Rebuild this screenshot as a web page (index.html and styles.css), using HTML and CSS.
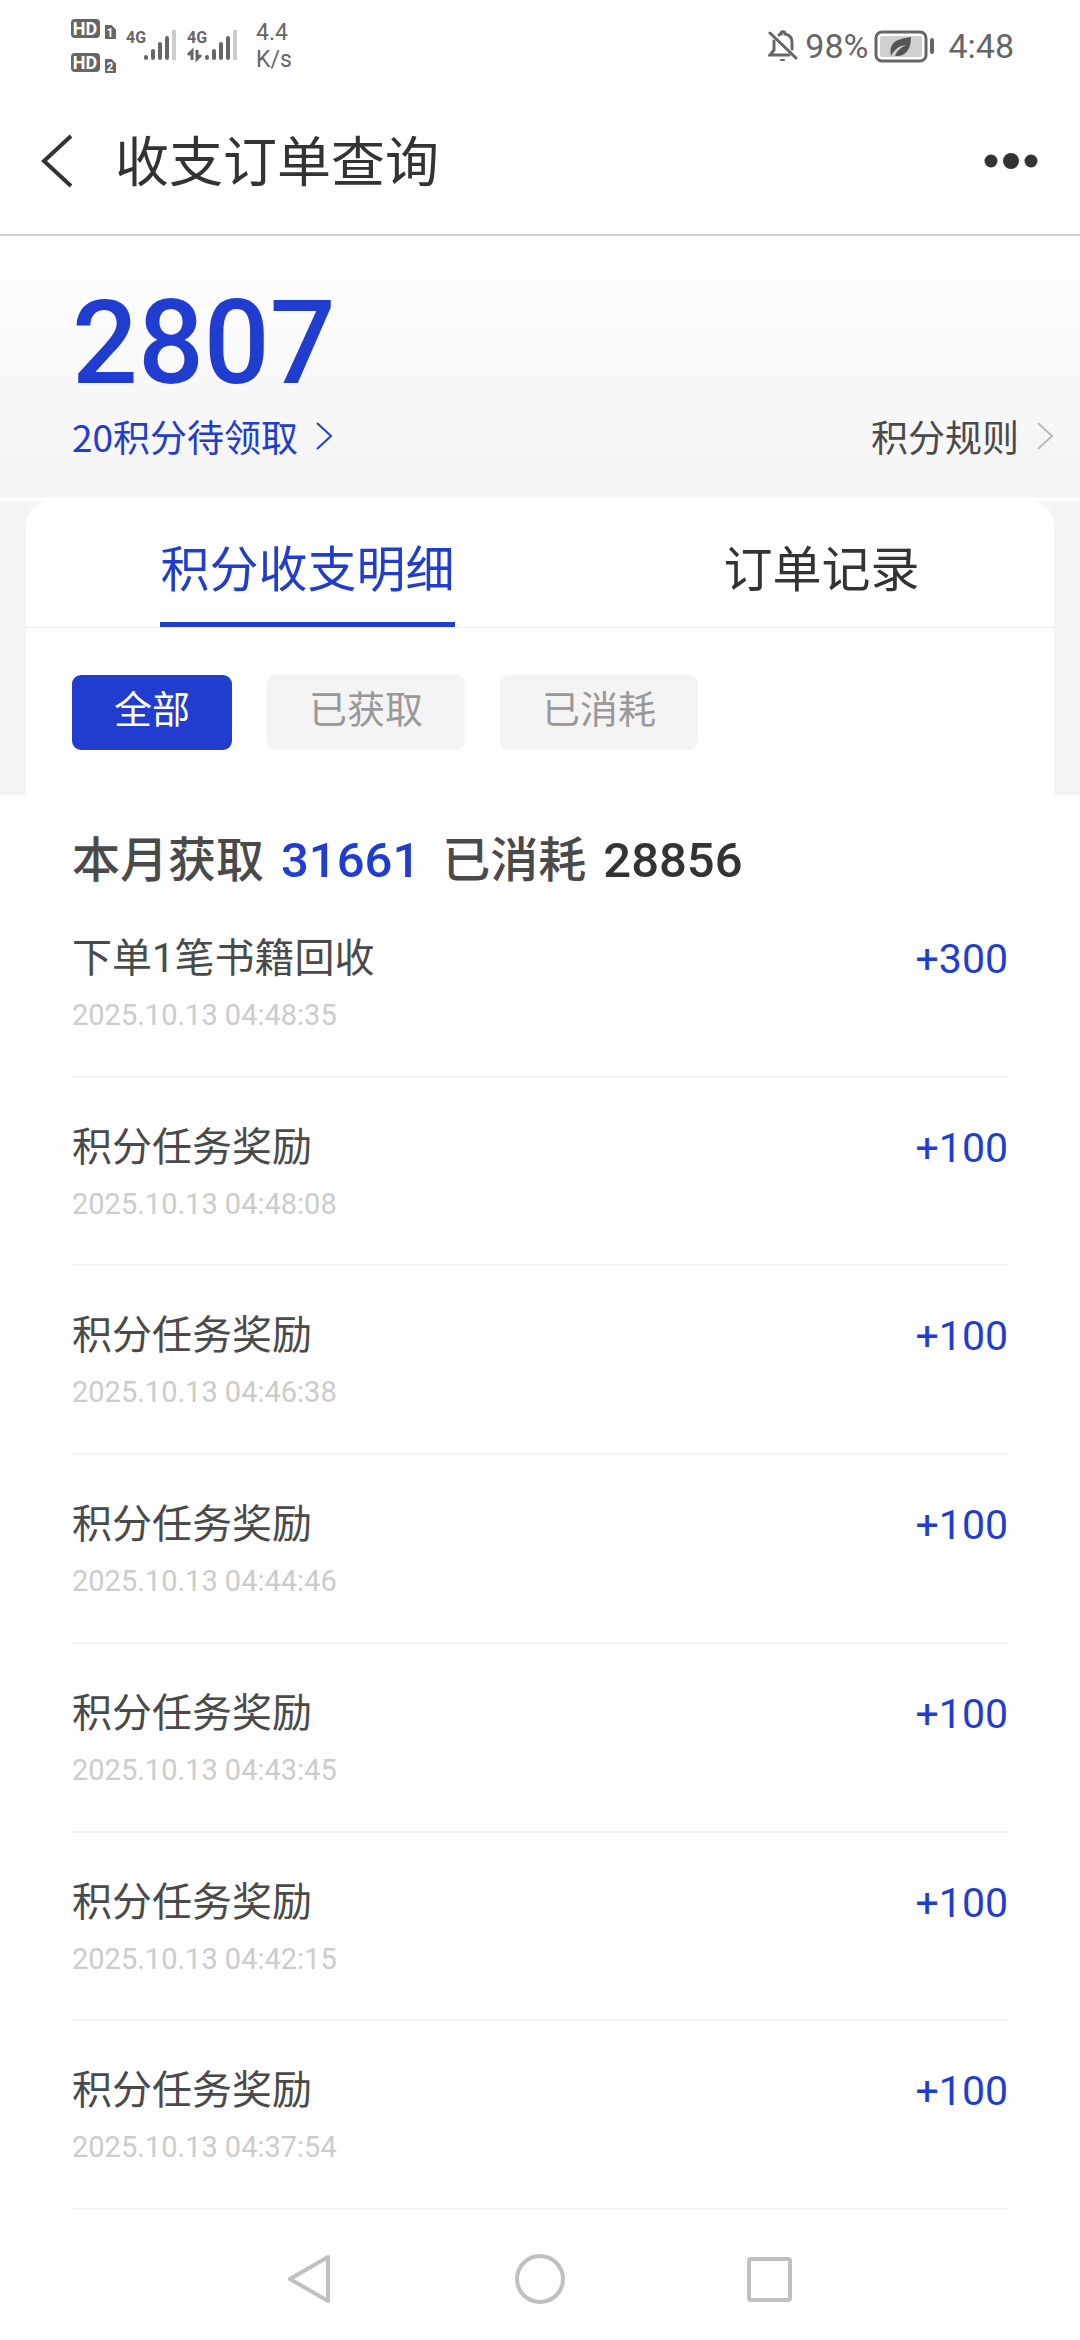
FILE: index.html
```
<!DOCTYPE html>
<html lang="zh-CN">
<head>
  <meta charset="UTF-8">
  <meta name="viewport" content="width=device-width, initial-scale=1.0">
  <title>收支订单查询</title>
  <link rel="stylesheet" href="styles.css">
</head>
<body>
  <!-- 状态栏 -->
  <div class="status">
    <div class="status-left">
      <svg class="status-signal" width="168" height="60" viewBox="0 0 168 60">
        <rect x="1" y="4" width="29" height="19" rx="4" fill="#666"/>
        <text class="hd" x="15" y="20">HD</text>
        <path d="M36 11h5l4 4v8H36z" fill="#666" stroke="#666" stroke-width="2" stroke-linejoin="round"/>
        <text class="sim" x="40" y="22">1</text>
        <rect x="1" y="38" width="29" height="19" rx="4" fill="#666"/>
        <text class="hd" x="15" y="54">HD</text>
        <path d="M36 45h5l4 4v8H36z" fill="#666" stroke="#666" stroke-width="2" stroke-linejoin="round"/>
        <text class="sim" x="40" y="56">2</text>
        <text class="net" x="56" y="28">4G</text>
        <g stroke="#666" stroke-width="4" stroke-linecap="round">
          <path d="M76 42v1M83 36v7M90 29v14M97 23v20"/>
          <path d="M137 42v1M144 36v7M151 29v14M158 23v20"/>
        </g>
        <path d="M104 15v30M165 15v30" stroke="#ccc" stroke-width="4"/>
        <text class="net" x="117" y="28">4G</text>
        <path d="M122 45V36l-4 4M127 35v9l4-4" fill="none" stroke="#666" stroke-width="3"/>
      </svg>
      <div class="speed">4.4<br>K/s</div>
    </div>
    <div class="status-right">
      <svg width="30" height="34" viewBox="0 0 30 34" fill="none" stroke="#666" stroke-width="3" stroke-linecap="round">
        <path d="M2 4l26 25"/>
        <path d="M6 12v9l-4 5h19"/>
        <path d="M11 6c1-1 1-1 2-1 0-3 4-3 4 0 5 1 7 4 7 8v7"/>
        <path d="M13 31h3" stroke-width="2"/>
      </svg>
      <span class="percent">98%</span>
      <svg class="battery" width="62" height="34" viewBox="0 0 62 34">
        <rect x="2" y="3" width="50" height="29" rx="6" fill="#fff" stroke="#666" stroke-width="3"/>
        <rect x="6" y="7" width="42" height="21" rx="2" fill="#d0d0d0"/>
        <path d="M17 27c-2-12 3-17 20-19 0 12-5 20-16 19 2-5 5-8 11-11-8 1-12 5-15 11z" fill="#555"/>
        <path d="M58 11v12" stroke="#666" stroke-width="4" stroke-linecap="round"/>
      </svg>
      <span class="time">4:48</span>
    </div>
  </div>

  <!-- 标题栏 -->
  <header class="header">
    <button class="back" type="button" aria-label="返回">
      <svg width="34" height="54" viewBox="0 0 34 54" fill="none" stroke="#333" stroke-width="4">
        <path d="M31 2L4 27l27 25"/>
      </svg>
    </button>
    <h1 class="header-title">收支订单查询</h1>
    <button class="more" type="button" aria-label="更多">
      <svg width="54" height="16" viewBox="0 0 54 16" fill="#333">
        <circle cx="7" cy="8" r="6.5"/>
        <circle cx="27" cy="8" r="8"/>
        <circle cx="47" cy="8" r="6.5"/>
      </svg>
    </button>
  </header>

  <!-- 积分总数 -->
  <section class="points">
    <div class="points-num">2807</div>
    <div class="points-links">
      <a class="points-wait" href="#">20积分待领取
        <svg width="18" height="30" viewBox="0 0 18 30" fill="none" stroke="currentColor" stroke-width="2"><path d="M2 2l14 13L2 28"/></svg>
      </a>
      <a class="points-rule" href="#">积分规则
        <svg width="18" height="30" viewBox="0 0 18 30" fill="none" stroke="#bbb" stroke-width="2"><path d="M2 2l14 13L2 28"/></svg>
      </a>
    </div>
  </section>

  <section class="panel">
    <div class="card">
      <div class="tabs">
        <button class="tab active" type="button">积分收支明细</button>
        <button class="tab" type="button">订单记录</button>
      </div>
      <div class="filters">
        <button class="filter active" type="button">全部</button>
        <button class="filter" type="button">已获取</button>
        <button class="filter" type="button">已消耗</button>
      </div>
    </div>
  </section>

  <!-- 明细列表 -->
  <main class="content">
    <div class="summary">
      <span>本月获取</span>
      <span class="summary-num get">31661</span>
      <span>已消耗</span>
      <span class="summary-num">28856</span>
    </div>
    <ul class="list">
      <li class="item">
        <div>
          <div class="item-title">下单1笔书籍回收</div>
          <div class="item-date">2025.10.13 04:48:35</div>
        </div>
        <div class="item-num">+300</div>
      </li>
      <li class="item">
        <div>
          <div class="item-title">积分任务奖励</div>
          <div class="item-date">2025.10.13 04:48:08</div>
        </div>
        <div class="item-num">+100</div>
      </li>
      <li class="item">
        <div>
          <div class="item-title">积分任务奖励</div>
          <div class="item-date">2025.10.13 04:46:38</div>
        </div>
        <div class="item-num">+100</div>
      </li>
      <li class="item">
        <div>
          <div class="item-title">积分任务奖励</div>
          <div class="item-date">2025.10.13 04:44:46</div>
        </div>
        <div class="item-num">+100</div>
      </li>
      <li class="item">
        <div>
          <div class="item-title">积分任务奖励</div>
          <div class="item-date">2025.10.13 04:43:45</div>
        </div>
        <div class="item-num">+100</div>
      </li>
      <li class="item">
        <div>
          <div class="item-title">积分任务奖励</div>
          <div class="item-date">2025.10.13 04:42:15</div>
        </div>
        <div class="item-num">+100</div>
      </li>
      <li class="item">
        <div>
          <div class="item-title">积分任务奖励</div>
          <div class="item-date">2025.10.13 04:37:54</div>
        </div>
        <div class="item-num">+100</div>
      </li>
    </ul>
  </main>

  <!-- 系统导航键 -->
  <nav class="navbar">
    <button type="button" aria-label="后退">
      <svg width="50" height="50" viewBox="0 0 50 50"><path d="M43 3v44L5 25z"/></svg>
    </button>
    <button type="button" aria-label="主页">
      <svg width="50" height="50" viewBox="0 0 50 50"><circle cx="25" cy="25" r="23"/></svg>
    </button>
    <button type="button" aria-label="最近任务">
      <svg width="50" height="50" viewBox="0 0 50 50"><rect x="4" y="5" width="41" height="41" rx="2"/></svg>
    </button>
  </nav>
</body>
</html>
```
FILE: styles.css
```
* {
  box-sizing: border-box;
}
body {
  margin: 0;
  min-height: 100vh;
  display: flex;
  flex-direction: column;
  background: #fefefe;
  color: #333;
  font-family: Roboto, "Noto Sans CJK SC", sans-serif;
}
button {
  margin: 0;
  padding: 0;
  border: 0;
  background: none;
  color: inherit;
  font-family: inherit;
}
a {
  text-decoration: none;
}
svg {
  display: block;
}

/* 状态栏 */
.status {
  display: flex;
  justify-content: space-between;
  height: 88px;
  padding: 15px 66px 0 70px;
  color: #666;
}
.status-left {
  display: flex;
}
.status-signal text {
  font-family: Roboto, sans-serif;
  font-weight: 700;
}
.status-signal .hd {
  font-size: 18px;
  fill: #fff;
  text-anchor: middle;
}
.status-signal .sim {
  font-size: 12px;
  fill: #fff;
  text-anchor: middle;
}
.status-signal .net {
  font-size: 16px;
  fill: #666;
}
.speed {
  margin-left: 18px;
  padding-top: 4px;
  font-size: 23px;
  line-height: 27px;
}
.status-right {
  display: flex;
  align-items: center;
  height: 62px;
  font-size: 34px;
}
.percent {
  margin-left: 7px;
}
.battery {
  margin: 0 12px 0 6px;
}

/* 标题栏 */
.header {
  display: flex;
  align-items: center;
  height: 148px;
  padding: 0 42px 0 40px;
  border-bottom: 2px solid #d4d4d4;
}
.header-title {
  flex: 1;
  margin: 0 0 0 41px;
  padding-top: 5px;
  font-size: 54px;
  font-weight: 400;
  line-height: 80px;
}

/* 积分总数 */
.points {
  padding: 48px 26px 36px 72px;
  background: linear-gradient(#fefefe, #f4f4f4);
}
.points-num {
  color: #213dd0;
  font-size: 116px;
  font-weight: 500;
  line-height: 118px;
}
.points-links {
  display: flex;
  justify-content: space-between;
  margin-top: 9px;
  font-family: "Noto Sans CJK SC", sans-serif;
  font-size: 37px;
  line-height: 50px;
}
.points-links a {
  display: flex;
  align-items: center;
  gap: 17px;
}
.points-wait {
  color: #213dd0;
}
.points-rule {
  color: #4a4a4a;
}

.panel {
  padding: 0 26px;
  border-top: 4px solid #fff;
  background: #f4f4f4;
}
.card {
  background: #fefefe;
  border-radius: 24px 24px 0 0;
}
.tabs {
  display: flex;
  justify-content: space-around;
  border-bottom: 1px solid #eee;
}
.tab {
  padding: 39px 0 20px;
  border-bottom: 5px solid transparent;
  font-size: 49px;
  line-height: 62px;
}
.tab.active {
  color: #213dd0;
  border-bottom-color: #213dd0;
}
.filters {
  display: flex;
  gap: 35px;
  padding: 47px 46px 45px;
}
.filter {
  padding: 0 42px 4px;
  border-radius: 9px;
  background: #f4f4f4;
  color: #999;
  font-size: 38px;
  line-height: 71px;
}
.filter.active {
  background: #213dd0;
  color: #fff;
}

/* 明细列表 */
.content {
  flex: 1;
  display: flex;
  flex-direction: column;
  padding: 38px 72px 0;
}
.summary {
  display: flex;
  align-items: center;
  font-size: 48px;
  font-weight: 500;
  line-height: 56px;
  color: #4a4a4a;
}
.summary-num {
  margin-left: 17px;
  font-size: 49px;
  color: #333;
}
.summary-num.get {
  margin-right: 22px;
  color: #213dd0;
}
.list {
  flex: 1;
  display: flex;
  flex-direction: column;
  margin: 0;
  padding: 0;
  list-style: none;
}
.item {
  flex: 1;
  display: flex;
  justify-content: space-between;
  padding: 43px 0 40px;
  border-bottom: 2px solid #f2f2f2;
}
.item-title {
  color: #4a4a4a;
  font-size: 40px;
  line-height: 54px;
}
.item-date {
  margin-top: 9px;
  color: #ccc;
  font-size: 29px;
  line-height: 40px;
}
.item-num {
  color: #213dd0;
  font-size: 41px;
  line-height: 54px;
}

.navbar {
  display: flex;
  justify-content: center;
  gap: 180px;
  padding: 44px 0 36px;
}
.navbar svg {
  fill: none;
  stroke: #c0c0c0;
  stroke-width: 4;
  stroke-linejoin: round;
}
```
